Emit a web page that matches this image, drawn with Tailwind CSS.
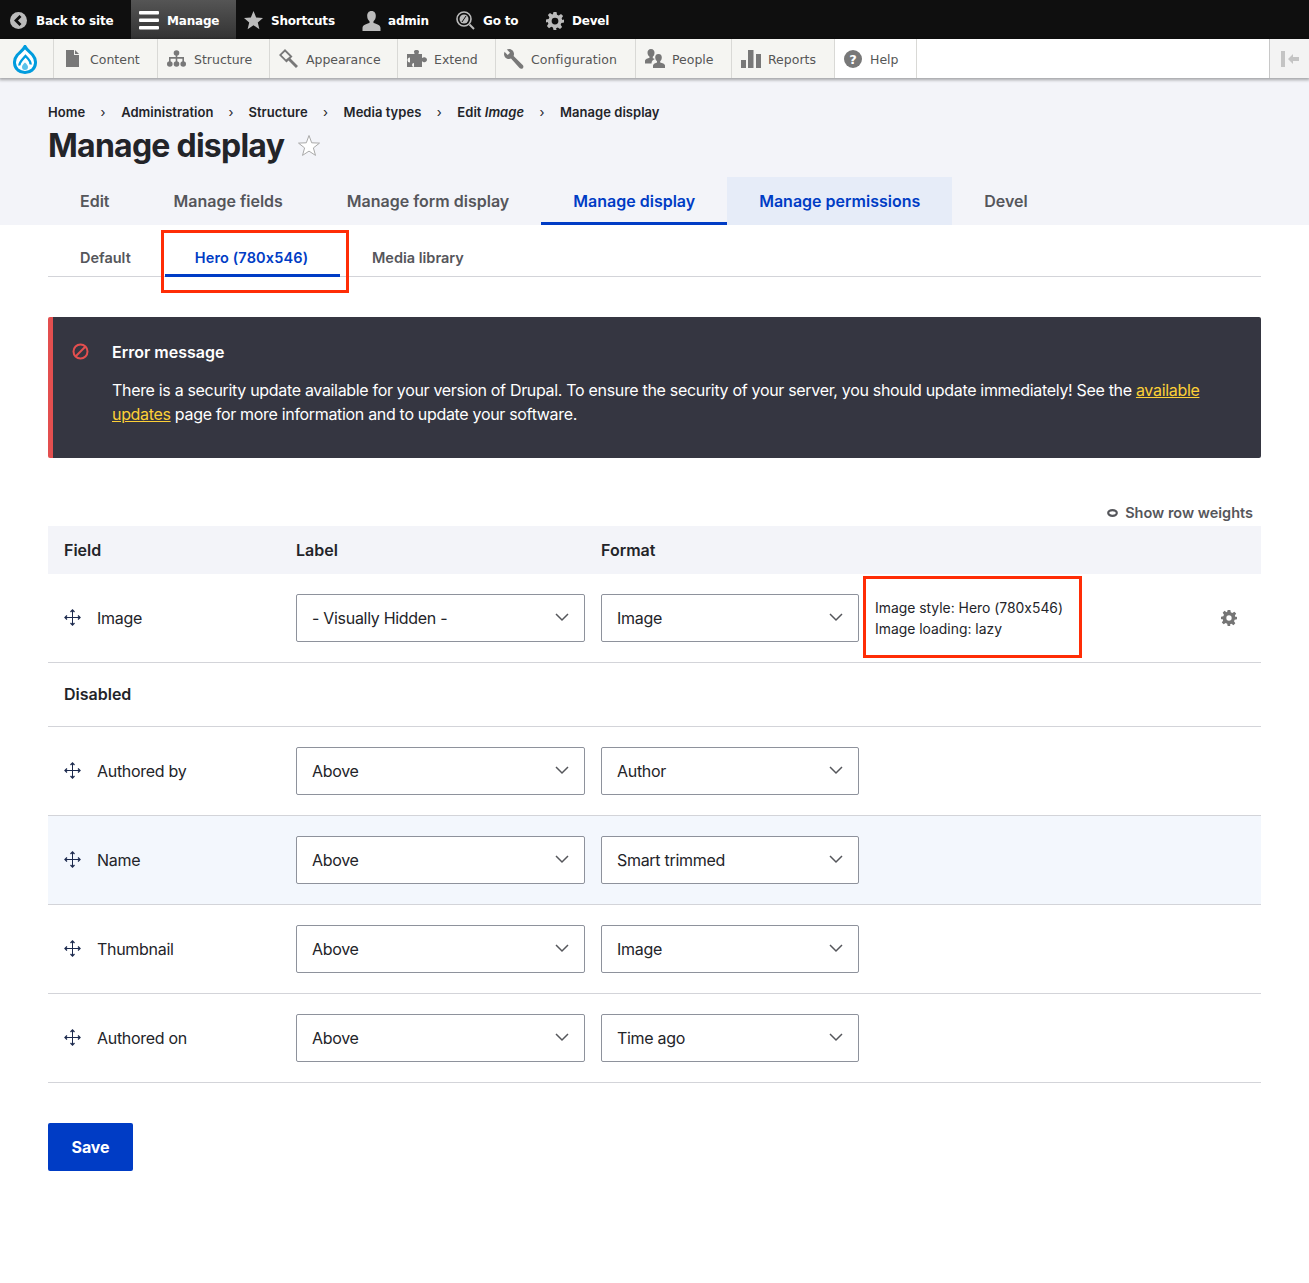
<!DOCTYPE html>
<html lang="en"><head><meta charset="utf-8"><title>Manage display</title>
<script src="https://cdn.jsdelivr.net/npm/@tailwindcss/browser@4"></script></head>
<body class="bg-white font-['Inter','Liberation_Sans',sans-serif] [font-feature-settings:'calt'_0] text-[#232429] h-[1283px] overflow-hidden">
<!-- top toolbar -->
<div class="h-[39px] pt-[2px] bg-[#0f0f0f] flex items-center font-['DejaVu_Sans',sans-serif] text-[12px] tracking-[-0.2px] font-bold text-white relative z-10">
  <a class="flex items-center h-full pl-[10px] w-[131px] gap-[9px]"><svg class="w-[17px] h-[17px]" viewBox="0 0 17 17"><circle cx="8.500" cy="8.500" r="8.500" fill="#bbb"/><path d="M10.500 4 6 8.500l4.500 4.500" fill="none" stroke="#0f0f0f" stroke-width="2.800"/></svg><span>Back to site</span></a>
  <a class="flex items-center h-[39px] -mt-[2px] w-[105px] pl-[8px] gap-[8px] bg-gradient-to-b from-[#555] to-[#333]"><svg class="w-[20px] h-[20px]" viewBox="0 0 20 20" fill="#fff"><rect y="1" width="20" height="3.500" rx="1"/><rect y="8.500" width="20" height="3.500" rx="1"/><rect y="16" width="20" height="3.500" rx="1"/></svg><span class="pt-[2px]">Manage</span></a>
  <a class="flex items-center h-full w-[117px] pl-[8px] gap-[8px]"><svg class="w-[19px] h-[19px]" viewBox="0 0 20 20" fill="#bbb"><path d="m10 0 2.800 6.800 7.200.6-5.500 4.700 1.700 7.100L10 15l-6.200 4.200 1.700-7.100L0 7.400l7.200-.6z"/></svg><span>Shortcuts</span></a>
  <a class="flex items-center h-full w-[101px] pl-[9px] gap-[7px]"><svg class="w-[19px] h-[20px]" viewBox="0 0 19 20" fill="#bbb"><path d="M9.500 0c3 0 4.300 2.300 4.300 5 0 2.300-1 4.300-2.300 5.300v1.700c3 .8 7 2 7 5v3H.5v-3c0-3 4-4.200 7-5v-1.700C6.200 9.300 5.200 7.300 5.200 5c0-2.700 1.300-5 4.300-5z"/></svg><span>admin</span></a>
  <a class="flex items-center h-full w-[92px] pl-[2px] gap-[8px]"><svg class="w-[19px] h-[19px]" viewBox="0 0 19 19" fill="none" stroke="#bbb"><circle cx="8" cy="8" r="7" stroke-width="1.600"/><circle cx="8" cy="8" r="4.500" fill="#bbb" stroke="none"/><path d="m6 11 4-6" stroke="#0f0f0f" stroke-width="1"/><path d="m13.500 13.500 4.500 4.500" stroke-width="2"/></svg><span>Go to</span></a>
  <a class="flex items-center h-full gap-[8px]"><svg class="w-[18px] h-[18px]" viewBox="0 0 24 24" fill="#bbb"><path d="M10 0h4l.7 3.500 2.300 1 3-2 2.800 2.800-2 3 1 2.300L24 10v4l-3.500.7-1 2.300 2 3-2.800 2.800-3-2-2.300 1L14 24h-4l-.7-3.500-2.300-1-3 2-2.800-2.800 2-3-1-2.300L0 14v-4l3.500-.7 1-2.300-2-3L5.300 1.200l3 2 1-.4zM12 7.500a4.500 4.500 0 1 0 0 9 4.500 4.500 0 0 0 0-9z"/></svg><span>Devel</span></a>
</div>
<!-- tray -->
<div class="h-[39px] bg-[#f5f5f2] flex font-['DejaVu_Sans',sans-serif] text-[12.500px] text-[#565656] shadow-[0_1px_3px_1px_rgba(0,0,0,0.33)] relative z-10">
  <a class="w-[54px] flex items-center justify-center border-r border-[#d9d9d6] pr-[4px] pt-[2px]"><svg class="w-[24px] h-[30px]" viewBox="0 0 24 30"><path d="M12 1.500c1.700 3.600 5.300 5.700 7.700 8.500 4.300 5.200 3.300 11.500-.5 15-3.800 3.300-10.600 3.300-14.400 0-3.800-3.500-4.800-9.800-.5-15C7 7.200 10.300 5.100 12 1.500z" fill="#fff" stroke="#009cde" stroke-width="3"/><path d="M6.500 20.500C6 17.500 9 15 12.500 11c2.500 2.500 5.500 5 5 8.500" fill="none" stroke="#009cde" stroke-width="2.400"/><path d="M12 17.500c1.500 1.500 3 2.800 3 4.500a3 3 0 0 1-6 0c0-1.700 1.500-3 3-4.500z" fill="#5cc2ea"/></svg></a>
  <a class="w-[104px] flex items-center gap-[10px] pl-[12px] border-r border-[#d9d9d6]"><svg class="w-[14px] h-[17px]" viewBox="0 0 14 17" fill="#787878"><path d="M0 0h8v5h5v12H0zM9 0l4 4H9z"/></svg><span class="pt-[3px]">Content</span></a>
  <a class="w-[112px] flex items-center gap-[8px] pl-[9px] border-r border-[#d9d9d6]"><svg class="w-[19px] h-[17px]" viewBox="0 0 19 17" fill="#787878"><circle cx="9.500" cy="3" r="2.800"/><circle cx="2.800" cy="14" r="2.800"/><circle cx="9.500" cy="14" r="2.800"/><circle cx="16.200" cy="14" r="2.800"/><path d="M8.700 4h1.600v3h6.700v5h-1.600V8.700h-5.100V12H8.700V8.700H3.600V12H2V7h6.700z"/></svg><span class="pt-[3px]">Structure</span></a>
  <a class="w-[128px] flex items-center gap-[8px] pl-[9px] border-r border-[#d9d9d6]"><svg class="w-[19px] h-[19px]" viewBox="0 0 19 19" fill="#787878"><path d="m0 6 6-6 7.500 7.500-2 2 7.500 7.500-2 2-7.500-7.500-2 2zm2.500 0 4.500 4.500L10.800 7.500 6 2.800z"/></svg><span class="pt-[3px] tracking-[-0.05px]">Appearance</span></a>
  <a class="w-[98px] flex items-center gap-[7px] pl-[9px] border-r border-[#d9d9d6]"><svg class="w-[20px] h-[18px]" viewBox="0 0 20 18" fill="#787878"><path d="M7 1.500C7 .5 8 0 9.500 0S12 .5 12 1.500 11.500 3 11.500 4H15v4c1 0 1.500-.7 2.500-.7s2.500 1 2.500 2.500-1.500 2.500-2.500 2.500-1.500-.8-2.500-.8v5.500H0V4h7.500c0-1-.5-1.500-.5-2.500zM3 7.500a2.500 2.500 0 0 0 0 5zM7 13a2 2 0 0 0 0 4z"/></svg><span class="pt-[3px]">Extend</span></a>
  <a class="w-[140px] flex items-center gap-[7px] pl-[8px] border-r border-[#d9d9d6]"><svg class="w-[20px] h-[20px]" viewBox="0 0 20 20" fill="#787878"><path d="M5 0 2.800.5 6 3.700 3.700 6 .5 2.800 0 5c0 3 2.500 5 5 5 .8 0 1.300-.1 2-.4L15.500 19c1 1 2.500 1 3.300.2s.9-2.200-.1-3.200L9.600 7c.3-.7.4-1.200.4-2 0-2.500-2-5-5-5z"/></svg><span class="pt-[3px] tracking-[0.1px]">Configuration</span></a>
  <a class="w-[96px] flex items-center gap-[7px] pl-[9px] border-r border-[#d9d9d6]"><svg class="w-[20px] h-[19px]" viewBox="0 0 20 19" fill="#787878"><path d="M6 0c2.500 0 3.500 1.800 3.500 3.800 0 1.800-.7 3.200-1.700 4v1.500c.6.2 1.400.4 2 .7-1.500.7-3.300 2-3.300 4.500H0v-2.500c0-2 3-2.800 4.500-3.200V7.800c-1-.8-2-2.200-2-4C2.500 1.800 3.500 0 6 0z"/><path d="M13.500 5c2.500 0 3.300 1.700 3.300 3.500 0 1.500-.6 3-1.600 3.700v1.300c2 .5 4.800 1.300 4.800 3V19H8v-2.500c0-1.700 2.800-2.500 4-3v-1.300c-1-.7-1.800-2.200-1.800-3.700 0-1.800.8-3.500 3.300-3.500z"/></svg><span class="pt-[3px]">People</span></a>
  <a class="w-[103px] flex items-center gap-[7px] pl-[9px] border-r border-[#d9d9d6]"><svg class="w-[20px] h-[18px]" viewBox="0 0 20 18" fill="#787878"><rect y="10" width="5" height="8"/><rect x="7" width="5.500" height="18"/><rect x="15" y="4" width="5" height="14"/></svg><span class="pt-[3px]">Reports</span></a>
  <a class="w-[82px] flex items-center gap-[8px] pl-[9px] bg-white border-r border-[#d9d9d6]"><svg class="w-[18px] h-[18px]" viewBox="0 0 18 18"><circle cx="9" cy="9" r="9" fill="#787878"/><text x="9" y="13.500" text-anchor="middle" font-size="13" font-weight="700" fill="#fff" font-family="DejaVu Sans">?</text></svg><span class="pt-[3px]">Help</span></a>
  <div class="flex-1 bg-white"></div>
  <a class="w-[40px] flex items-center justify-center gap-[3px] bg-[#f3f3f3] border-l border-[#c8c8c8]"><span class="w-[4px] h-[16px] bg-[#c4c4c4]"></span><svg class="w-[11px] h-[10px]" viewBox="0 0 11 10" fill="#c4c4c4"><path d="M0 5l5-5v3h6v4H5v3z"/></svg></a>
</div>
<!-- header -->
<header class="bg-[#f3f4f9] h-[147px] px-[48px] relative">
  <nav class="pt-[26px] flex items-center text-[13px] tracking-[0.03px] leading-[16px] font-semibold h-[42px] text-[#232429]">
    <span>Home</span><span class="w-[36px] text-center font-normal">›</span>
    <span>Administration</span><span class="w-[35px] text-center font-normal">›</span>
    <span>Structure</span><span class="w-[36px] text-center font-normal">›</span>
    <span>Media types</span><span class="w-[36px] text-center font-normal">›</span>
    <span>Edit <em class="italic">Image</em></span><span class="w-[36px] text-center font-normal">›</span>
    <span>Manage display</span>
  </nav>
  <div class="flex items-center mt-[7px] h-[38px]">
    <h1 class="text-[32px] leading-[38px] font-bold tracking-[-0.75px]">Manage display</h1>
    <svg class="w-[24px] h-[24px] ml-[13px]" viewBox="0 0 24 24" fill="#fff" stroke="#a9a9a9"><path d="m12 1.500 2.700 7.300 7.800.3-6.100 4.800 2.100 7.500-6.500-4.300-6.500 4.300 2.100-7.500L1.500 9.100l7.800-.3z"/></svg>
  </div>
  <nav class="absolute left-[48px] bottom-0 flex h-[48px] text-[16px] font-semibold text-[#55565b]">
    <a class="px-[32px] flex items-center">Edit</a>
    <a class="px-[32px] flex items-center">Manage fields</a>
    <a class="px-[32px] flex items-center">Manage form display</a>
    <a class="px-[32px] flex items-center text-[#003cc5] border-b-[3px] border-[#003cc5] pt-[3px]">Manage display</a>
    <a class="px-[32px] flex items-center text-[#003cc5] bg-[#e6ecf8]">Manage permissions</a>
    <a class="px-[32px] flex items-center">Devel</a>
  </nav>
</header>
<main class="px-[48px] relative">
  <nav class="flex h-[52px] border-b border-[#d3d4d9] text-[14.500px] font-semibold text-[#55565b]">
    <a class="w-[115px] pl-[32px] pt-[14px] flex items-center">Default</a>
    <a class="w-[175px] ml-[2px] h-[52px] flex items-center justify-center tracking-[0.15px] pr-[2px] text-[#003cc5] border-b-[3px] border-[#003cc5] pt-[16px]">Hero (780x546)</a>
    <a class="px-[32px] pt-[14px] flex items-center">Media library</a>
  </nav>
  <section class="mt-[40px] h-[141px] bg-[#353641] rounded-[2px] border-l-[5px] border-[#e34f4f] text-white flex">
    <svg class="w-[17px] h-[17px] mt-[26px] ml-[19px] shrink-0" viewBox="0 0 17 17" fill="none" stroke="#e34f4f" stroke-width="2"><circle cx="8.500" cy="8.500" r="7"/><path d="m3.500 13.500 10-10"/></svg>
    <div class="ml-[23px] pt-[23px]">
      <h2 class="text-[16px] leading-[24px] font-semibold">Error message</h2>
      <p class="mt-[14px] text-[16px] leading-[24px] w-[1110px] tracking-[-0.32px]">There is a security update available for your version of Drupal. To ensure the security of your server, you should update immediately! See the <a class="text-[#fdd037] underline">available</a> <a class="text-[#fdd037] underline">updates</a> page for more information and to update your software.</p>
    </div>
  </section>
  <div class="mt-[44px] mb-[2px] h-[22px] flex items-center justify-end gap-[7px] pr-[8px] text-[14.500px] font-semibold text-[#55565b]">
    <svg class="w-[11px] h-[8px]" viewBox="0 0 11 8" fill="none" stroke="#55565b" stroke-width="2.200"><ellipse cx="5.500" cy="4" rx="4.300" ry="2.800"/></svg><span>Show row weights</span>
  </div>
  <div class="grid grid-cols-[232px_305px_1fr] h-[48px] items-center pl-[16px] bg-[#f3f4f9] text-[16px] font-semibold"><span>Field</span><span>Label</span><span>Format</span></div>

  <div class="grid grid-cols-[33px_199px_305px_258px_1fr] h-[89px] items-center pl-[16px] border-b border-[#d3d4d9] text-[16px] tracking-[-0.3px] pb-px">
    <svg class="w-[17px] h-[17px]" viewBox="0 0 17 17" fill="none" stroke="#1c2a4e"><path d="M8.500 1v15M1 8.500h15"/><path d="m6.500 3 2-2 2 2M6.500 14l2 2 2-2M3 6.500l-2 2 2 2M14 6.500l2 2-2 2" stroke-width="1.300"/></svg>
    <span>Image</span>
    <div class="w-[289px] h-[48px] border border-[#8e929c] rounded-[2px] flex items-center justify-between pl-[15px] pr-[15px]"><span>- Visually Hidden -</span><svg class="w-[14px] h-[9px]" viewBox="0 0 14 9" fill="none" stroke="#55565b" stroke-width="1.500"><path d="m1 1 6 6 6-6"/></svg></div>
    <div class="w-[258px] h-[48px] border border-[#8e929c] rounded-[2px] flex items-center justify-between pl-[15px] pr-[15px]"><span>Image</span><svg class="w-[14px] h-[9px]" viewBox="0 0 14 9" fill="none" stroke="#55565b" stroke-width="1.500"><path d="m1 1 6 6 6-6"/></svg></div>
    <div class="flex items-center justify-between pl-[16px] pr-[24px]">
      <div class="text-[13.900px] leading-[21px] tracking-normal pt-[2px]"><div>Image style: Hero (780x546)</div><div>Image loading: lazy</div></div>
      <svg class="w-[16px] h-[16px]" viewBox="0 0 24 24" fill="#757575"><path d="M10 0h4l.7 3.500 2.300 1 3-2 2.800 2.800-2 3 1 2.300L24 10v4l-3.500.7-1 2.300 2 3-2.800 2.800-3-2-2.300 1L14 24h-4l-.7-3.500-2.300-1-3 2-2.800-2.800 2-3-1-2.300L0 14v-4l3.500-.7 1-2.300-2-3L5.300 1.200l3 2 1-.4zM12 8a4 4 0 1 0 0 8 4 4 0 0 0 0-8z"/></svg>
    </div>
  </div>
  <div class="h-[64px] pl-[16px] pb-[2px] flex items-center border-b border-[#d3d4d9] text-[16px] font-semibold">Disabled</div>

  <div class="grid grid-cols-[33px_199px_305px_258px_1fr] h-[89px] items-center pl-[16px] border-b border-[#d3d4d9] text-[16px] tracking-[-0.3px] pb-px">
    <svg class="w-[17px] h-[17px]" viewBox="0 0 17 17" fill="none" stroke="#1c2a4e"><path d="M8.500 1v15M1 8.500h15"/><path d="m6.500 3 2-2 2 2M6.500 14l2 2 2-2M3 6.500l-2 2 2 2M14 6.500l2 2-2 2" stroke-width="1.300"/></svg>
    <span>Authored by</span>
    <div class="w-[289px] h-[48px] bg-white border border-[#8e929c] rounded-[2px] flex items-center justify-between pl-[15px] pr-[15px]"><span>Above</span><svg class="w-[14px] h-[9px]" viewBox="0 0 14 9" fill="none" stroke="#55565b" stroke-width="1.500"><path d="m1 1 6 6 6-6"/></svg></div>
    <div class="w-[258px] h-[48px] bg-white border border-[#8e929c] rounded-[2px] flex items-center justify-between pl-[15px] pr-[15px]"><span>Author</span><svg class="w-[14px] h-[9px]" viewBox="0 0 14 9" fill="none" stroke="#55565b" stroke-width="1.500"><path d="m1 1 6 6 6-6"/></svg></div>
  </div>
  <div class="grid grid-cols-[33px_199px_305px_258px_1fr] h-[89px] items-center pl-[16px] border-b border-[#d3d4d9] text-[16px] tracking-[-0.3px] pb-px bg-[#f3f7fd]">
    <svg class="w-[17px] h-[17px]" viewBox="0 0 17 17" fill="none" stroke="#1c2a4e"><path d="M8.500 1v15M1 8.500h15"/><path d="m6.500 3 2-2 2 2M6.500 14l2 2 2-2M3 6.500l-2 2 2 2M14 6.500l2 2-2 2" stroke-width="1.300"/></svg>
    <span>Name</span>
    <div class="w-[289px] h-[48px] bg-white border border-[#8e929c] rounded-[2px] flex items-center justify-between pl-[15px] pr-[15px]"><span>Above</span><svg class="w-[14px] h-[9px]" viewBox="0 0 14 9" fill="none" stroke="#55565b" stroke-width="1.500"><path d="m1 1 6 6 6-6"/></svg></div>
    <div class="w-[258px] h-[48px] bg-white border border-[#8e929c] rounded-[2px] flex items-center justify-between pl-[15px] pr-[15px]"><span>Smart trimmed</span><svg class="w-[14px] h-[9px]" viewBox="0 0 14 9" fill="none" stroke="#55565b" stroke-width="1.500"><path d="m1 1 6 6 6-6"/></svg></div>
  </div>
  <div class="grid grid-cols-[33px_199px_305px_258px_1fr] h-[89px] items-center pl-[16px] border-b border-[#d3d4d9] text-[16px] tracking-[-0.3px] pb-px">
    <svg class="w-[17px] h-[17px]" viewBox="0 0 17 17" fill="none" stroke="#1c2a4e"><path d="M8.500 1v15M1 8.500h15"/><path d="m6.500 3 2-2 2 2M6.500 14l2 2 2-2M3 6.500l-2 2 2 2M14 6.500l2 2-2 2" stroke-width="1.300"/></svg>
    <span>Thumbnail</span>
    <div class="w-[289px] h-[48px] bg-white border border-[#8e929c] rounded-[2px] flex items-center justify-between pl-[15px] pr-[15px]"><span>Above</span><svg class="w-[14px] h-[9px]" viewBox="0 0 14 9" fill="none" stroke="#55565b" stroke-width="1.500"><path d="m1 1 6 6 6-6"/></svg></div>
    <div class="w-[258px] h-[48px] bg-white border border-[#8e929c] rounded-[2px] flex items-center justify-between pl-[15px] pr-[15px]"><span>Image</span><svg class="w-[14px] h-[9px]" viewBox="0 0 14 9" fill="none" stroke="#55565b" stroke-width="1.500"><path d="m1 1 6 6 6-6"/></svg></div>
  </div>
  <div class="grid grid-cols-[33px_199px_305px_258px_1fr] h-[89px] items-center pl-[16px] border-b border-[#d3d4d9] text-[16px] tracking-[-0.3px] pb-px">
    <svg class="w-[17px] h-[17px]" viewBox="0 0 17 17" fill="none" stroke="#1c2a4e"><path d="M8.500 1v15M1 8.500h15"/><path d="m6.500 3 2-2 2 2M6.500 14l2 2 2-2M3 6.500l-2 2 2 2M14 6.500l2 2-2 2" stroke-width="1.300"/></svg>
    <span>Authored on</span>
    <div class="w-[289px] h-[48px] bg-white border border-[#8e929c] rounded-[2px] flex items-center justify-between pl-[15px] pr-[15px]"><span>Above</span><svg class="w-[14px] h-[9px]" viewBox="0 0 14 9" fill="none" stroke="#55565b" stroke-width="1.500"><path d="m1 1 6 6 6-6"/></svg></div>
    <div class="w-[258px] h-[48px] bg-white border border-[#8e929c] rounded-[2px] flex items-center justify-between pl-[15px] pr-[15px]"><span>Time ago</span><svg class="w-[14px] h-[9px]" viewBox="0 0 14 9" fill="none" stroke="#55565b" stroke-width="1.500"><path d="m1 1 6 6 6-6"/></svg></div>
  </div>
  <button class="mt-[40px] w-[85px] h-[48px] bg-[#003cc5] rounded-[2px] text-white text-[16px] font-bold tracking-[-0.1px]">Save</button>
  <!-- annotations -->
  <div class="absolute left-[161px] top-[5px] w-[188px] h-[63px] border-[3px] border-[#ff2d06]"></div>
  <div class="absolute left-[863px] top-[351px] w-[219px] h-[82px] border-[3px] border-[#ff2d06]"></div>
</main>
</body></html>
